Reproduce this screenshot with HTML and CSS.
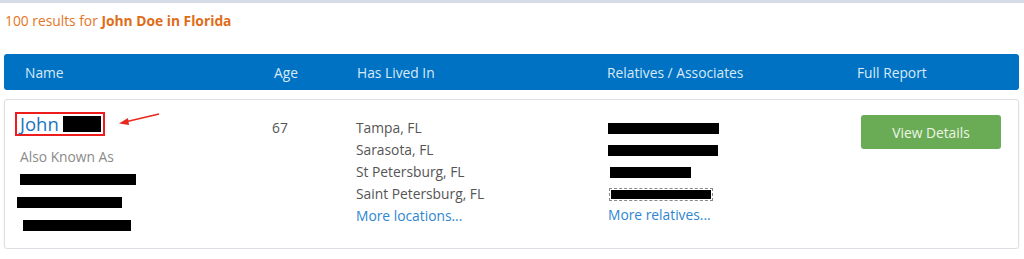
FILE: index.html
```
<!DOCTYPE html>
<html>
<head>
<meta charset="utf-8">
<link rel="stylesheet" href="styles.css">
</head>
<body>
<div class="topline"></div>
<div class="page">
  <p class="summary">100 results for <b>John Doe in Florida</b></p>
  <div class="thead">
    <div class="c-name">Name</div>
    <div class="c-age">Age</div>
    <div class="c-lived">Has Lived In</div>
    <div class="c-rel">Relatives / Associates</div>
    <div class="c-report">Full Report</div>
  </div>
  <div class="card">
    <div class="c-name">
      <div class="namebox"><a class="name">John</a><span class="redact nm"></span></div>
      <svg class="arrow" width="44" height="16" viewBox="0 0 44 16"><line x1="42" y1="2" x2="8" y2="10" stroke="#e8281c" stroke-width="1.6"/><polygon points="2,11.5 11,6 12,13" fill="#e8281c"/></svg>
      <div class="aka">Also Known As</div>
      <div class="akalist">
        <div class="akaline"><span class="redact" style="width:116px;margin-left:0"></span></div>
        <div class="akaline"><span class="redact" style="width:105px;margin-left:-3px"></span></div>
        <div class="akaline"><span class="redact" style="width:108px;margin-left:3px"></span></div>
      </div>
    </div>
    <div class="c-age">67</div>
    <div class="c-lived">
      <div class="line">Tampa, FL</div>
      <div class="line">Sarasota, FL</div>
      <div class="line">St Petersburg, FL</div>
      <div class="line">Saint Petersburg, FL</div>
      <div class="line"><a class="more">More locations...</a></div>
    </div>
    <div class="c-rel">
      <div class="line"><span class="redact" style="width:111px"></span></div>
      <div class="line"><span class="redact" style="width:110px"></span></div>
      <div class="line"><span class="redact" style="width:81px;margin-left:2px"></span></div>
      <div class="line"><span class="redact sel" style="width:100px;margin-left:3px"></span></div>
      <div class="line"><a class="more">More relatives...</a></div>
    </div>
    <div class="c-report"><a class="btn">View Details</a></div>
  </div>
</div>
</body>
</html>
```
FILE: styles.css
```
html, body { margin: 0; padding: 0; background: #fff; }
body { font-family: "Open Sans", "Noto Sans", sans-serif; font-size: 13.8px; color: #555; }
.topline { height: 3px; background: #d5dce8; }
.page { padding: 0 5px 0 4px; }
.summary { margin: 8px 0 0 1px; color: #e67425; font-size: 13.8px; line-height: 19px; }
.summary b { color: #df6c18; font-weight: 700; }
.thead {
  margin-top: 24px; height: 36px; background: #0072c3; border-radius: 3px;
  display: grid; grid-template-columns: 249px 83px 250px 250px 1fr; align-items: center;
  color: #d9e9f6;
}
.thead > div { padding-left: 21px; }
.card {
  margin-top: 9px; height: 150px; box-sizing: border-box;
  border: 1px solid #dcdfe3; border-radius: 3px; box-shadow: 0 1px 2px rgba(0,0,0,0.08);
  display: grid; grid-template-columns: 249px 83px 250px 250px 1fr;
  padding-top: 12px;
}
.card .c-name { padding-left: 10px; position: relative; }
.card .c-age { padding-left: 18px; padding-top: 5px; line-height: 22px; }
.card .c-lived { padding-left: 19px; padding-top: 5px; }
.card .c-rel { padding-left: 21px; padding-top: 4px; }
.card .c-report { padding-left: 24px; padding-top: 3px; }
.line { height: 22px; line-height: 22px; white-space: nowrap; }
.namebox {
  display: inline-flex; align-items: center; gap: 4px;
  border: 2px solid #ee1c1c; padding: 0 2px 0 3px; height: 20px;
}
.name { color: #1c73be; font-size: 18.5px; line-height: 20px; }
.redact { display: inline-block; background: #000; height: 11px; vertical-align: middle; }
.redact.nm { width: 38px; height: 16px; }
.redact.sel { height: 9px; outline: 1px dashed #888; outline-offset: 1px; }
.arrow { position: absolute; left: 112px; top: 0px; }
.aka { color: #8a8a8a; margin-top: 11px; padding-left: 5px; line-height: 19px; }
.akalist { margin-top: 2px; }
.akaline { height: 23px; display: flex; align-items: center; padding-left: 5px; }
.more { color: #2e86d0; }
.btn {
  display: flex; align-items: center; justify-content: center;
  width: 140px; height: 34px; background: #6aac55; border-radius: 3px; color: #eef6e8;
}
```
